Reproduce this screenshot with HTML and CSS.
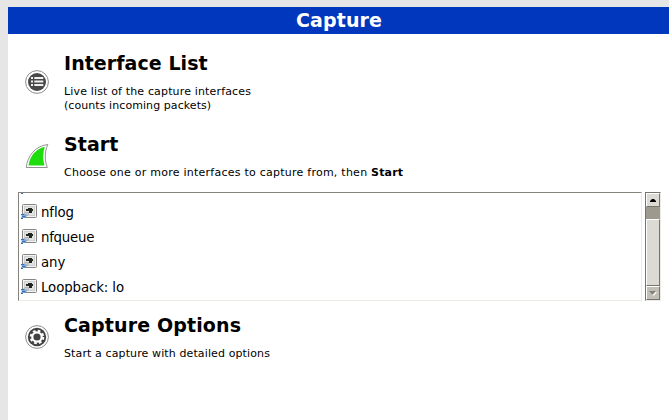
FILE: index.html
```html
<!DOCTYPE html>
<html lang="en">
<head>
<meta charset="utf-8">
<title>Capture</title>
<link rel="stylesheet" href="styles.css">
</head>
<body>
<svg width="0" height="0" class="defs">
  <symbol id="nic" viewBox="0 0 16 16">
    <rect x="1.5" y=".5" width="14" height="13" rx="1" fill="#f3f3f1" stroke="#858585"/>
    <rect x="3.500" y="2.500" width="10" height="9" fill="#e2e2e0" stroke="#cfcfcd"/>
    <path d="M5 7V5h2V4h4v1h1v2h-1v2H8V7z" fill="#222820"/>
    <path d="M4 8.500h3.500v2l-2.500 2H2v-2z" fill="#c8cbd0" stroke="#a0a3a6" stroke-width=".7"/>
    <path d="M0 10h4l2 1-1 2-3 1-1 1H0v-2h1z" fill="#78a8dc"/>
    <path d="M0 10.500h3M1 12.500h3M0 14.500h2" stroke="#3c6cae" fill="none"/>
  </symbol>
</svg>
<main class="panel">
  <h1 class="bar">Capture</h1>
  <section class="item interfaces">
    <svg class="icon" viewBox="0 0 24 24">
      <circle cx="12" cy="12" r="11.4" fill="#fff" stroke="#8c8c8c"/>
      <circle cx="12" cy="12" r="9" fill="#484848"/>
      <path d="M6 8h2M6 11.500h2M6 15h2M9.300 8H18.300M9.300 11.500H18.300M9.300 15H18.300" stroke="#f0f0f0" stroke-width="2.200"/>
    </svg>
    <div>
      <h2>Interface List</h2>
      <p><span class="live">Live list of the capture interfaces</span><br><span class="counts">(counts incoming packets)</span></p>
    </div>
  </section>
  <section class="item start">
    <svg class="icon" viewBox="0 0 24 24">
      <path d="M1.2 23.5C2.5 12 10 2 22.8.5C19.5 8 19.5 16 22.3 23.5z" fill="#fff" stroke="#929292"/>
      <path d="M3.500 21.500C5 12 10.500 5 19.800 2.800C17.700 9 17.700 15.500 19.500 21.500z" fill="#1fdc0c"/>
    </svg>
    <div>
      <h2>Start</h2>
      <p><span class="choose">Choose one or more interfaces to capture from, then </span><b>Start</b></p>
    </div>
  </section>
  <div class="chooser">
    <ul class="list">
      <li class="cut"><svg class="nic"><use href="#nic"/></svg></li>
      <li><svg class="nic"><use href="#nic"/></svg>nflog</li>
      <li class="queue"><svg class="nic"><use href="#nic"/></svg>nfqueue</li>
      <li><svg class="nic"><use href="#nic"/></svg>any</li>
      <li><svg class="nic"><use href="#nic"/></svg>Loopback: lo</li>
    </ul>
    <div class="scroll">
      <div class="btn"><svg viewBox="0 0 11 11"><path d="M3 8h6V7L7 5H5L3 7z" fill="#000"/></svg></div>
      <div class="trough"></div>
      <div class="thumb"></div>
      <div class="btn down"><svg viewBox="0 0 11 11"><path d="M3 5h7L7 8.500H6z" fill="#fff"/><path d="M2 4h7L6 7.500H5z" fill="#858178"/></svg></div>
    </div>
  </div>
  <section class="item options">
    <svg class="icon" viewBox="0 0 24 24">
      <circle cx="12" cy="12" r="11.4" fill="#fff" stroke="#8c8c8c"/>
      <circle cx="12" cy="12" r="9.200" fill="#424242"/>
      <circle cx="12" cy="12" r="6.300" fill="none" stroke="#fff" stroke-width="2" stroke-dasharray="2.700 2.248"/>
      <circle cx="12" cy="12" r="4.700" fill="none" stroke="#fff" stroke-width="2.200"/>
    </svg>
    <div>
      <h2>Capture Options</h2>
      <p>Start a capture with detailed options</p>
    </div>
  </section>
</main>
</body>
</html>
```
FILE: styles.css
```css
* { box-sizing: border-box; margin: 0; padding: 0; }
body {
  height: 420px;
  padding: 7px 0 0 8px;
  overflow: hidden;
  background: #e6e6e6;
  color: #000;
  font-family: "DejaVu Sans", sans-serif;
}
.defs { display: block; height: 0; }
.panel { height: 413px; background: #fff; }
.bar {
  height: 27px;
  padding-left: 1px;
  background: #0037bd;
  color: #fff;
  font-size: 19px;
  line-height: 26px;
  letter-spacing: .1px;
  text-align: center;
}
.item { display: flex; align-items: flex-start; gap: 15px; padding-left: 17px; }
.icon { display: block; width: 24px; height: 24px; }
.item h2 { font-size: 19px; line-height: 24px; letter-spacing: .06px; }
.item p { margin-top: 10px; font-size: 11px; line-height: 14px; white-space: nowrap; }
.live { letter-spacing: .155px; }
.counts { letter-spacing: .07px; }
.choose { letter-spacing: .245px; }
.start b { letter-spacing: .15px; }
.interfaces { height: 61px; margin-top: 17px; }
.interfaces .icon { margin-top: 19px; }
.start { height: 47px; margin-top: 20px; }
.start .icon { margin-top: 12px; }
.chooser { display: flex; gap: 3px; height: 109px; margin: 13px 0 0 10px; }
.list {
  width: 624px;
  overflow: hidden;
  border: 1px solid;
  border-color: #85837b #edebe6 #edebe6 #85837b;
  list-style: none;
}
.list li {
  display: flex;
  align-items: center;
  gap: 4px;
  height: 25px;
  padding-left: 2px;
  font-size: 13.33px;
  letter-spacing: -.1px;
}
.list .queue { letter-spacing: -.26px; }
.list .cut { margin-top: -18px; }
.nic { width: 16px; height: 16px; flex: none; margin-bottom: 1px; }
.scroll {
  display: flex;
  flex-direction: column;
  width: 16px;
  border: 1px solid;
  border-color: #77746c #edebe6 #edebe6 #77746c;
  background: #9e998f;
}
.btn, .thumb {
  border: 1px solid;
  border-color: #fff #77746c #77746c #fff;
  background: #dcdad5;
}
.btn { height: 14px; }
.btn svg { display: block; width: 11px; height: 11px; }
.trough { height: 12px; }
.thumb { height: 67px; }
.down { background: #c2bfb8; }
.options { height: 47px; margin-top: 12px; }
.options .icon { margin-top: 12px; }
.options h2 { letter-spacing: .14px; }
.options p { letter-spacing: .115px; }
```
